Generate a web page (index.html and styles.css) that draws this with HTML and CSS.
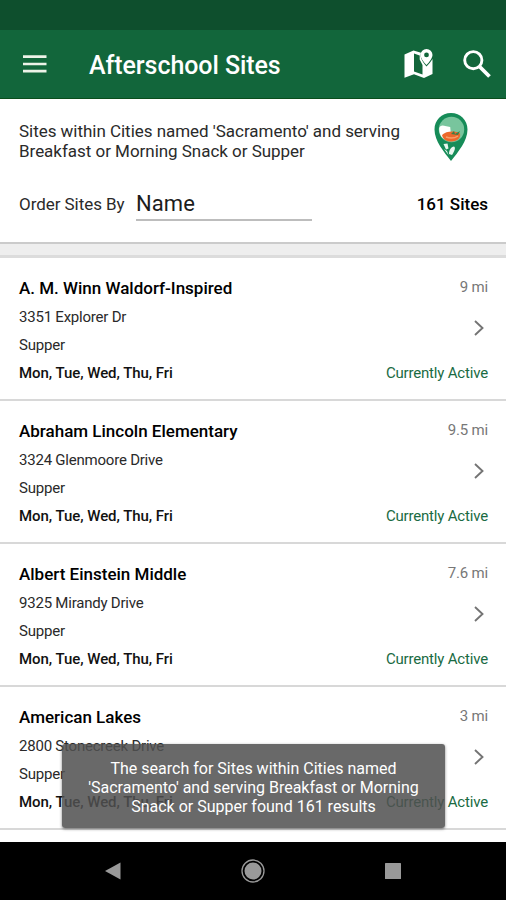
FILE: index.html
```html
<!DOCTYPE html>
<html lang="en">
<head>
<meta charset="utf-8">
<title>Afterschool Sites</title>
<link rel="stylesheet" href="styles.css">
</head>
<body>
<div class="status"></div>
<header class="bar">
  <svg class="menu" viewBox="0 0 24 18"><path d="M0 1.6h23.5M0 9h23.5M0 16.2h23.5" stroke="#edf3e8" stroke-width="2.7"/></svg>
  <h1>Afterschool Sites</h1>
  <svg class="map" viewBox="0 0 30 30"><path fill="#fff" fill-rule="evenodd" d="M.5 5.5 9.5 1.5 17 3.8C15.6 8.8 18.5 12.5 22.5 17.5 25 15 27 12.5 28.5 10V25L20 29 10 25.2.5 28.8ZM10 4.5V22.5L18.5 25.5V16L15.7 10.5V6.5Z"/><path fill="#fff" fill-rule="evenodd" d="M22.5 0A6 6 0 0 0 16.5 6C16.5 10 22.5 16 22.5 16S28.5 10 28.5 6A6 6 0 0 0 22.5 0ZM22.5 3.5A2.4 2.4 0 1 1 22.5 8.3 2.4 2.4 0 0 1 22.5 3.5Z"/></svg>
  <svg class="search" viewBox="0 0 28 28"><circle cx="10.3" cy="10.2" r="8.6" fill="none" stroke="#fff" stroke-width="2.9"/><path d="m16.5 16.5 10 10" stroke="#fff" stroke-width="3.8"/></svg>
</header>
<section class="summary">
  <div class="query">
    <p>Sites within Cities named 'Sacramento' and serving<br>Breakfast or Morning Snack or Supper</p>
    <svg class="pin" viewBox="0 0 34 48"><path d="M17 0C7.500 0 .5 7.200.5 16.500.5 28 10 39 17 48 24 39 33.500 28 33.500 16.500 33.500 7.200 26.500 0 17 0Z" fill="#168c58"/><circle cx="17.500" cy="16.500" r="12.700" fill="#78c59d"/><path d="M5.200 15c1-3 4-3 6-2l5 1 .5 5.500-6 6.500C7 25 5 20 5.200 15Z" fill="#fff"/><path d="M8 22c4-4 13-4.500 18-1.500 1 4-2.500 8-8.500 8S9 26 8 22Z" fill="#ec692c"/><path d="M12 24c4 1.500 9 1 12-1" stroke="#f8a06a" stroke-width="1.500" fill="none"/><path d="m17 21 3-3 1 3 5-3-2 4Z" fill="#3c7d45"/><path d="m9.500 31 4-.5 1 5-2.500 1ZM20 33.500c2 1 .5 5-2 8.500l-3-1c0-4 2-7 5-7.500ZM10 36l3 2 1.500 4Z" fill="#e9f7ef"/></svg>
  </div>
  <div class="order">
    <span class="label">Order Sites By</span>
    <span class="select"><span>Name</span></span>
    <strong>161 Sites</strong>
  </div>
</section>
<div class="gap"></div>
<main>
  <article class="site">
    <div class="info"><h2>A. M. Winn Waldorf-Inspired</h2><p>3351 Explorer Dr</p><p>Supper</p><p class="days">Mon, Tue, Wed, Thu, Fri</p></div>
    <div class="side"><span class="dist">9 mi</span><svg class="chev" viewBox="0 0 10 16"><path d="m1 1 7.500 7L1 15" fill="none" stroke="#747474" stroke-width="1.900"/></svg><span class="state">Currently Active</span></div>
  </article>
  <article class="site">
    <div class="info"><h2>Abraham Lincoln Elementary</h2><p>3324 Glenmoore Drive</p><p>Supper</p><p class="days">Mon, Tue, Wed, Thu, Fri</p></div>
    <div class="side"><span class="dist">9.5 mi</span><svg class="chev" viewBox="0 0 10 16"><path d="m1 1 7.500 7L1 15" fill="none" stroke="#747474" stroke-width="1.900"/></svg><span class="state">Currently Active</span></div>
  </article>
  <article class="site">
    <div class="info"><h2>Albert Einstein Middle</h2><p>9325 Mirandy Drive</p><p>Supper</p><p class="days">Mon, Tue, Wed, Thu, Fri</p></div>
    <div class="side"><span class="dist">7.6 mi</span><svg class="chev" viewBox="0 0 10 16"><path d="m1 1 7.500 7L1 15" fill="none" stroke="#747474" stroke-width="1.900"/></svg><span class="state">Currently Active</span></div>
  </article>
  <article class="site">
    <div class="info"><h2>American Lakes</h2><p>2800 Stonecreek Drive</p><p>Supper</p><p class="days">Mon, Tue, Wed, Thu, Fri</p></div>
    <div class="side"><span class="dist">3 mi</span><svg class="chev" viewBox="0 0 10 16"><path d="m1 1 7.500 7L1 15" fill="none" stroke="#747474" stroke-width="1.900"/></svg><span class="state">Currently Active</span></div>
  </article>
</main>
<div class="toast">The search for Sites within Cities named<br>'Sacramento' and serving Breakfast or Morning<br>Snack or Supper found 161 results</div>
<nav class="nav">
  <svg viewBox="0 0 24 24"><path d="M4 12 19.500 3.500v17Z" fill="#999"/></svg>
  <svg viewBox="0 0 24 24"><circle cx="12" cy="12" r="11" fill="none" stroke="#999" stroke-width="1.300"/><circle cx="12" cy="12" r="8.500" fill="#999"/></svg>
  <svg viewBox="0 0 24 24"><rect x="4" y="4" width="16" height="16" rx=".5" fill="#999"/></svg>
</nav>
</body>
</html>
```
FILE: styles.css
```css
* { box-sizing: border-box; }
body { margin: 0; width: 506px; height: 900px; overflow: hidden; position: relative; display: flex; flex-direction: column; background: #fff; color: #2a2a2a; font-family: Roboto, "Liberation Sans", sans-serif; }
h1, h2, p { margin: 0; }
svg { display: block; flex: none; }
.status { height: 30px; background: #0e4f2d; flex: none; }
.bar { height: 69px; flex: none; background: #12663b; border-bottom: 1px solid #0a4d1c; display: flex; align-items: center; padding: 0 15px 0 23px; }
.menu { width: 24px; height: 18px; }
.bar h1 { margin-left: 42px; margin-top: 3px; flex: 1; color: #fff; font-size: 25px; line-height: 30px; font-weight: 500; letter-spacing: -.07px; white-space: nowrap; }
.map { width: 30px; height: 30px; margin-right: 29px; }
.search { width: 28px; height: 28px; }
.summary { height: 145px; flex: none; padding: 14px 18px 0 19px; border-bottom: 2px solid #cbcbcb; }
.query { display: flex; justify-content: space-between; height: 72px; }
.query p { margin-top: 8px; font-size: 17px; line-height: 20px; letter-spacing: -.03px; white-space: nowrap; }
.pin { width: 34px; height: 48px; margin-right: 20px; }
.order { display: flex; align-items: flex-start; height: 40px; }
.label { width: 117px; font-size: 17px; line-height: 20px; letter-spacing: -.05px; margin-top: 9px; white-space: nowrap; }
.select { width: 176px; height: 36px; border-bottom: 2px solid #bdbdbd; color: #1c1c1c; font-size: 22px; line-height: 26px; padding-top: 6px; letter-spacing: .1px; }
.order strong { margin-left: auto; margin-top: 9px; font-size: 17px; line-height: 20px; font-weight: 500; color: #000; }
.gap { height: 14px; flex: none; background: #eee; border-bottom: 3px solid #dcdcdc; }
.site { height: 143px; padding: 19px 18px 0 19px; border-bottom: 2px solid #d8d8d8; display: flex; justify-content: space-between; }
.info { display: flex; flex-direction: column; white-space: nowrap; }
.info h2 { font-size: 17px; line-height: 22px; font-weight: 500; color: #000; margin-bottom: 8px; }
.info p { font-size: 15px; line-height: 20px; height: 28px; letter-spacing: -.22px; }
.info .days { font-weight: 500; color: #111; letter-spacing: -.05px; }
.side { display: flex; flex-direction: column; align-items: flex-end; white-space: nowrap; font-size: 15px; line-height: 20px; letter-spacing: -.18px; }
.dist { color: #777; }
.chev { width: 10px; height: 16px; margin: 23px 4px 27px 0; }
.state { color: #1a6b43; }
.toast { position: absolute; left: 62px; top: 744px; width: 383px; height: 84px; padding-top: 15px; background: rgba(80, 80, 80, .86); border-radius: 3px; box-shadow: 0 1px 3px rgba(0, 0, 0, .5); color: #fff; text-align: center; font-size: 16px; line-height: 19px; white-space: nowrap; }
.nav { position: absolute; left: 0; right: 0; bottom: 0; height: 58px; background: #000; display: flex; justify-content: space-between; align-items: center; padding: 0 101px; }
.nav svg { width: 24px; height: 24px; }
```
